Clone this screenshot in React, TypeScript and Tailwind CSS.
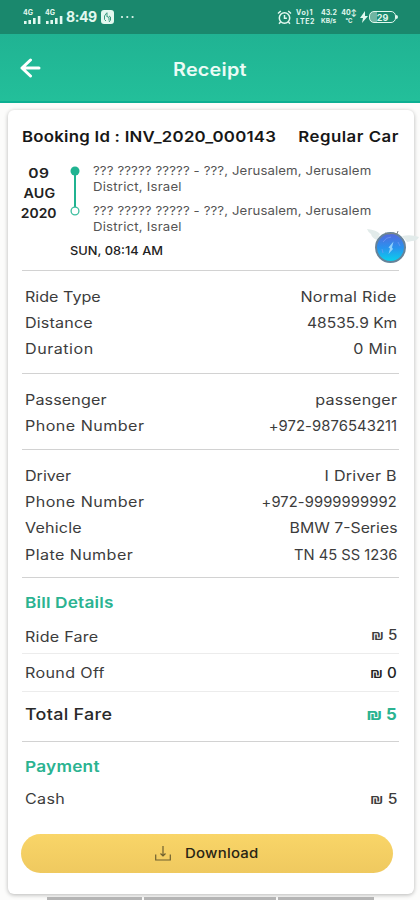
import React from "react";

type RowProps = {
  label: string;
  value: string;
  labelClass?: string;
  valueClass?: string;
  rowClass?: string;
};

function Row({
  label,
  value,
  labelClass = "scale-x-[1.15]",
  valueClass = "scale-x-[1.15]",
  rowClass = "h-[26.2px] text-sm text-[#3c3c3c]",
}: RowProps) {
  return (
    <div className={`flex shrink-0 items-center justify-between whitespace-nowrap pl-[3px] pr-0.5 ${rowClass}`}>
      <span className={`origin-left ${labelClass}`}>{label}</span>
      <span className={`origin-right ${valueClass}`}>{value}</span>
    </div>
  );
}

function Divider({ light = false }: { light?: boolean }) {
  return <div className={`h-px shrink-0 ${light ? "bg-[#ececec]" : "bg-[#d2d2d2]"}`} />;
}

function SectionTitle({ children, className }: { children: string; className: string }) {
  return (
    <h2 className={`origin-left scale-x-[1.15] pl-[2.6px] pt-[13px] text-[15px] font-semibold leading-6 text-[#2bb391] ${className}`}>
      {children}
    </h2>
  );
}

function Signal() {
  return (
    <div className="flex w-[18px] flex-col">
      <span className="h-[6px] text-[7px] font-bold leading-[6px]">4G</span>
      <svg width="18" height="8" viewBox="0 0 18 8" fill="currentColor">
        <path d="M1 5h2.600v3H1zM5.400 4h2.600v4H5.400zM10 2h2.600v6h-2.600zM14.800 0h2.600v8h-2.600z" />
      </svg>
    </div>
  );
}

function StatusBar() {
  return (
    <div className="flex h-[34px] shrink-0 items-center bg-[#1a886d] pl-[23px] pr-[22px] text-[#e2f8ef]">
      <Signal />
      <div className="w-1" />
      <Signal />
      <span className="ml-[3px] w-[31px] whitespace-nowrap text-sm font-bold leading-4 tracking-[-0.45px]">8:49</span>
      <svg className="ml-1" width="13" height="14" viewBox="0 0 13 14">
        <rect width="13" height="14" rx="3" fill="#e2f8ef" />
        <path d="M6 2.500L3.500 6v3.500L5 11M6 3v4M6 6.500l2 1v3M8 6l1.500 1v3L8 12" stroke="#3a9a80" fill="none" />
      </svg>
      <svg className="ml-1.5" width="15" height="4" viewBox="0 0 15 4" fill="currentColor">
        <circle cx="2" cy="2" r="1.1" />
        <circle cx="7.3" cy="2" r="1.1" />
        <circle cx="12.6" cy="2" r="1.1" />
      </svg>
      <div className="flex-1" />
      <svg width="15" height="15" viewBox="0 0 15 15" fill="none" stroke="currentColor" strokeWidth="1.5">
        <circle cx="7.5" cy="8" r="5.2" />
        <path d="M7.5 5v3.3h2.4M1 3.5L3.8 1M14 3.5L11.2 1M3.5 12L2 13.700M11.500 12l1.500 1.700" />
      </svg>
      <div className="ml-1 flex w-[21px] flex-col gap-px font-bold">
        <span className="text-[7px] leading-[8px] tracking-[0.6px]">Vo)1</span>
        <span className="text-[7px] leading-[8px] tracking-[0.6px]">LTE2</span>
      </div>
      <div className="ml-1 flex w-[17px] flex-col font-bold">
        <span className="text-[7px] leading-[8px]">43.2</span>
        <span className="text-[6.5px] leading-[8px]">KB/s</span>
      </div>
      <div className="ml-1 flex w-[14px] flex-col items-center font-bold">
        <span className="whitespace-nowrap text-[7px] leading-[8px]">40↕</span>
        <span className="text-[6px] leading-[8px]">°C</span>
      </div>
      <svg className="ml-1" width="8" height="12" viewBox="0 0 8 12" fill="currentColor">
        <path d="M5 0L0 7h3L2 12l6-7H5z" />
      </svg>
      <div className="ml-px flex h-[12px] w-[27px] items-center justify-center rounded-[5px] border-[1.5px] border-[#e2f8ef] bg-gradient-to-r from-[#70b5a2] from-30% to-[#1a886d] to-30% text-[9px] font-bold leading-none">
        29
      </div>
      <div className="h-1 w-0.5 rounded-r bg-[#e2f8ef]" />
    </div>
  );
}

function Address() {
  return (
    <p className="origin-left scale-x-[1.1] text-xs leading-4 text-[#555]">
      <span className="block whitespace-nowrap tracking-[0.1px]">??? ????? ????? - ???, Jerusalem, Jerusalem</span>
      <span className="block tracking-[0.18px]">District, Israel</span>
    </p>
  );
}

function Orb() {
  return (
    <svg className="absolute left-[366px] top-[225px]" width="54" height="42" viewBox="0 0 54 42">
      <defs>
        <linearGradient id="orb" x1="0" y1="0" x2="0" y2="1">
          <stop offset="0" stopColor="#5868dc" />
          <stop offset="0.5" stopColor="#2a91ee" />
          <stop offset="1" stopColor="#08d4ec" />
        </linearGradient>
      </defs>
      <path d="M1 4q10 1 13 5l-3 6Q6 13 5 9 2 7 1 4zM36 11q9-2 17 1-2 4-7 4l-5 1z" fill="#e2ebea" />
      <circle cx="24.500" cy="22.500" r="14.500" fill="url(#orb)" stroke="#66839a" strokeWidth="2" />
      <path d="M17 17q3-5 8-5M32 17l2 4M16 24l1 4" fill="none" stroke="#7d9cf5" strokeOpacity="0.6" />
      <path d="M27.500 16.500l-5 6 1.500 1-1.500 5.500 4.500-5-1-1.500z" fill="#8fd0fb" />
      <path d="M19 8l4 1 4-1 4 1 1-3" fill="none" stroke="#7c8587" />
    </svg>
  );
}

export default function App() {
  return (
    <div className="relative flex h-[900px] w-[420px] flex-col overflow-hidden bg-[#fcfcfb] font-[Inter,'DejaVu_Sans',sans-serif]">
      <StatusBar />
      <header className="flex h-[69px] shrink-0 items-center border-b-2 border-[#0caf92] bg-gradient-to-b from-[#20b393] to-[#23bf9a] text-[#ebfbf5]">
        <svg className="ml-5" width="21" height="20" viewBox="0 0 21 20" fill="none" stroke="white" strokeWidth="3" strokeLinecap="round" strokeLinejoin="round">
          <path d="M19 10H2M10.500 2L2 10l8.500 8" />
        </svg>
        <h1 className="ml-[132px] origin-left scale-x-[1.1] whitespace-nowrap pt-1 text-lg font-semibold leading-6 tracking-[0.2px]">Receipt</h1>
      </header>

      <main className="ml-2 mt-[7px] flex h-[784px] w-[406px] shrink-0 flex-col rounded-md bg-white pl-3.5 pr-[15px] shadow-[0_1px_4px_rgba(0,0,0,0.28)]">
        <div className="mt-[17px] flex h-5 shrink-0 items-center justify-between whitespace-nowrap text-[15px] font-semibold text-[#171717]">
          <span className="origin-left scale-x-[1.12] tracking-[0.22px]">Booking Id : INV_2020_000143</span>
          <span className="origin-right scale-x-[1.12] tracking-[0.45px]">Regular Car</span>
        </div>

        <section className="flex h-[123px] shrink-0 pt-4">
          <div className="flex w-[34px] flex-col items-center text-[13px] font-semibold leading-5 text-[#222]">
            <span className="scale-x-[1.2] tracking-[0.3px]">09</span>
            <span className="scale-x-[1.1] tracking-[0.1px]">AUG</span>
            <span className="scale-x-[1.07]">2020</span>
          </div>
          <div className="ml-3.5">
            <div className="flex">
              <svg width="10" height="56" viewBox="0 0 10 56">
                <path d="M5 8v36" stroke="#20b391" strokeWidth="2" />
                <circle cx="5" cy="8" r="4.500" fill="#20b391" />
                <circle cx="5" cy="48" r="3.900" fill="white" stroke="#3bbd9e" strokeWidth="1.3" />
              </svg>
              <div className="ml-[13px] flex flex-col gap-2">
                <Address />
                <Address />
              </div>
            </div>
            <div className="mt-2 w-fit origin-left scale-x-[1.07] whitespace-nowrap text-xs font-medium leading-4 text-[#222]">SUN, 08:14 AM</div>
          </div>
        </section>

        <Divider />
        <section className="flex h-[102px] shrink-0 flex-col pt-[13px]">
          <Row label="Ride Type" value="Normal Ride" valueClass="scale-x-[1.15] tracking-[0.25px]" />
          <Row label="Distance" value="48535.9 Km" labelClass="scale-x-[1.15] tracking-[0.15px]" valueClass="scale-x-[1.11]" />
          <Row label="Duration" value="0 Min" labelClass="scale-x-[1.15] tracking-[0.45px]" valueClass="scale-x-[1.15] tracking-[0.25px]" />
        </section>
        <Divider />
        <section className="flex h-[75px] shrink-0 flex-col pt-[13px]">
          <Row label="Passenger" value="passenger" labelClass="scale-x-[1.15] tracking-[0.1px]" valueClass="scale-x-[1.15] tracking-[0.15px]" />
          <Row label="Phone Number" value="+972-9876543211" labelClass="scale-x-[1.15] tracking-[0.4px]" valueClass="scale-x-[1.06] tracking-[0.05px]" />
        </section>
        <Divider />
        <section className="flex h-[127px] shrink-0 flex-col pt-[13px]">
          <Row label="Driver" value="I Driver B" valueClass="scale-x-[1.15] tracking-[0.2px]" />
          <Row label="Phone Number" value="+972-9999999992" labelClass="scale-x-[1.15] tracking-[0.4px]" valueClass="scale-x-[1.05] tracking-[0.1px]" />
          <Row label="Vehicle" value="BMW 7-Series" labelClass="scale-x-[1.15] tracking-[0.15px]" valueClass="scale-x-[1.13]" />
          <Row label="Plate Number" value="TN 45 SS 1236" labelClass="scale-x-[1.15] tracking-[0.35px]" valueClass="scale-x-[1.05]" />
        </section>
        <Divider />

        <section className="flex shrink-0 flex-col">
          <SectionTitle className="h-[43px] tracking-[0.15px]">Bill Details</SectionTitle>
          <Row label="Ride Fare" value="₪ 5" rowClass="h-8 text-sm text-[#3c3c3c]" labelClass="scale-x-[1.15] tracking-[0.2px]" valueClass="mb-1 scale-x-[1.08] font-medium" />
          <Divider light />
          <Row label="Round Off" value="₪ 0" rowClass="h-[37px] text-sm text-[#3c3c3c]" labelClass="scale-x-[1.15] tracking-[0.3px]" valueClass="scale-x-[1.08] font-medium text-[#222]" />
          <Divider light />
          <Row label="Total Fare" value="₪ 5" rowClass="h-[49px] pb-[5px] text-base" labelClass="scale-x-[1.12] font-medium text-[#292929] tracking-[0.27px]" valueClass="scale-x-[1.05] font-bold text-[#2bb391]" />
        </section>
        <Divider />
        <section className="flex h-[92px] shrink-0 flex-col">
          <SectionTitle className="h-[44px] tracking-[0.2px]">Payment</SectionTitle>
          <Row label="Cash" value="₪ 5" labelClass="scale-x-[1.15] tracking-[0.3px]" valueClass="scale-x-[1.12] font-medium" />
        </section>

        <button className="ml-[-1px] flex h-[39px] w-[372px] shrink-0 items-center rounded-full bg-gradient-to-b from-[#f9d568] to-[#efc95f] pl-[134px] text-[13px] font-medium text-[#292514]">
          <svg width="16" height="15" viewBox="0 0 16 15" fill="none" stroke="#6e602f" strokeWidth="1.2">
            <path d="M8 0v10M5.500 7.500L8 10l2.500-2.500M.7 8.500V14h14.600V8.500" />
          </svg>
          <span className="ml-3.5 origin-left scale-x-[1.15] pt-px tracking-[0.2px]">Download</span>
        </button>
      </main>

      <div className="ml-[47px] mt-[3px] flex h-[3px] shrink-0 gap-0.5">
        <div className="w-[95px] bg-[#b5b5b5]" />
        <div className="w-[132px] bg-[#b5b5b5]" />
        <div className="w-[96px] bg-[#b5b5b5]" />
      </div>
      <Orb />
    </div>
  );
}
